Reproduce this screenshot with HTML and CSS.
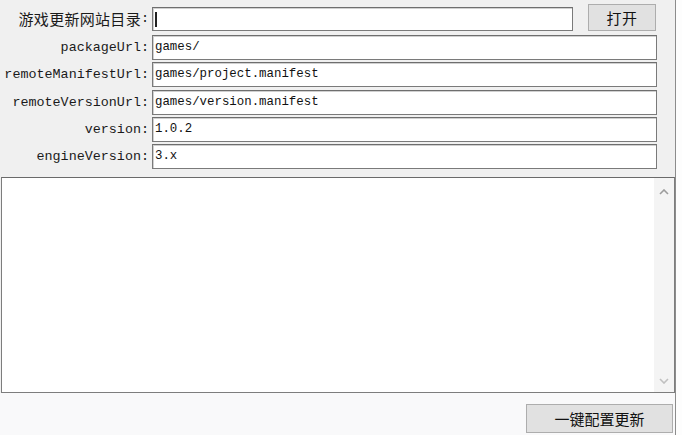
FILE: index.html
```html
<!DOCTYPE html>
<html lang="zh">
<head>
<meta charset="utf-8">
<title>热更新配置</title>
<link rel="stylesheet" href="styles.css">
</head>
<body>
<div class="screen">
  <div class="window">
    <div class="form">
      <div class="row row-first">
        <div class="label label-cn"><span class="cn">游戏更新网站目录</span>:</div>
        <div class="field field-short"><span class="caret"></span></div>
        <div class="btn btn-open">打开</div>
      </div>
      <div class="row">
        <div class="label">packageUrl:</div>
        <div class="field">games/</div>
      </div>
      <div class="row">
        <div class="label">remoteManifestUrl:</div>
        <div class="field">games/project.manifest</div>
      </div>
      <div class="row">
        <div class="label">remoteVersionUrl:</div>
        <div class="field">games/version.manifest</div>
      </div>
      <div class="row">
        <div class="label">version:</div>
        <div class="field">1.0.2</div>
      </div>
      <div class="row">
        <div class="label">engineVersion:</div>
        <div class="field">3.x</div>
      </div>
    </div>
    <div class="log">
      <div class="log-body"></div>
      <div class="scrollbar">
        <svg class="arrow" width="10" height="6" viewBox="0 0 10 6"><path d="M1 5 L5 1 L9 5" fill="none" stroke="#9c9c9c" stroke-width="1.6"/></svg>
        <svg class="arrow" width="10" height="6" viewBox="0 0 10 6"><path d="M1 1 L5 5 L9 1" fill="none" stroke="#c0c0c0" stroke-width="1.6"/></svg>
      </div>
    </div>
    <div class="footer">
      <div class="btn btn-config">一键配置更新</div>
    </div>
  </div>
  <div class="edge"></div>
  <div class="outside"></div>
</div>
</body>
</html>
```

FILE: styles.css
```css
html, body {
  margin: 0;
  padding: 0;
  width: 682px;
  height: 435px;
  overflow: hidden;
  background: #ffffff;
}

.screen {
  display: flex;
  height: 435px;
}

.window {
  width: 675px;
  height: 435px;
  display: flex;
  flex-direction: column;
  background: #f0f0f0;
}

.edge {
  width: 1px;
  background: #8c8c8c;
}

.outside {
  flex: 1;
  background: #fdfdfd;
}

.form {
  display: flex;
  flex-direction: column;
  gap: 2.25px;
  padding-top: 4px;
}

.row {
  display: flex;
  align-items: center;
  height: 25px;
}

.row-first {
  height: 27px;
  align-items: stretch;
  margin-bottom: 1.75px;
}

.label {
  width: 149px;
  flex: none;
  text-align: right;
  font-family: "Liberation Mono", "DejaVu Sans Mono", monospace;
  font-size: 13.4px;
  color: #1a1a1a;
  white-space: nowrap;
}

.label-cn {
  display: flex;
  align-items: center;
  justify-content: flex-end;
  padding-top: 2px;
}

.cn {
  font-family: "Noto Sans CJK SC", sans-serif;
  font-size: 15px;
  letter-spacing: 0.3px;
  color: #1a1a1a;
}

.field {
  box-sizing: border-box;
  margin-left: 3px;
  width: 505px;
  height: 25px;
  background: #ffffff;
  border: 1px solid #7a7a7a;
  border-top-color: #6e6e6e;
  box-shadow: inset 1px 1px 0 #d0d0d0;
  font-family: "Liberation Mono", "DejaVu Sans Mono", monospace;
  font-size: 12.4px;
  line-height: 23px;
  padding-left: 2px;
  color: #111111;
  white-space: nowrap;
}

.field-short {
  width: 421px;
  height: 24px;
  margin-top: 3px;
  display: flex;
  align-items: center;
}

.caret {
  width: 2px;
  height: 15px;
  background: #222222;
}

.btn {
  box-sizing: border-box;
  background: #e1e1e1;
  border: 1px solid #adadad;
  font-family: "Noto Sans CJK SC", sans-serif;
  font-size: 15px;
  color: #111111;
  display: flex;
  align-items: center;
  justify-content: center;
  letter-spacing: 0.5px;
}

.btn-open {
  margin-left: 15px;
  width: 68px;
  height: 27px;
}

.log {
  margin: 8px 0 0 1px;
  width: 674px;
  height: 216px;
  box-sizing: border-box;
  border: 1px solid #7d7d7d;
  border-top-color: #6a6a6a;
  background: #ffffff;
  display: flex;
}

.log-body {
  flex: 1;
  background: #ffffff;
}

.scrollbar {
  width: 20px;
  background: #f4f4f4;
  display: flex;
  flex-direction: column;
  justify-content: space-between;
  align-items: center;
  padding: 11px 0 8px;
}

.arrow {
  display: block;
}

.footer {
  flex: 1;
  background: #f9f9fa;
  display: flex;
  justify-content: flex-end;
  align-items: flex-start;
  padding: 11px 2px 0 0;
}

.btn-config {
  width: 147px;
  height: 29px;
  letter-spacing: 0;
}
```
